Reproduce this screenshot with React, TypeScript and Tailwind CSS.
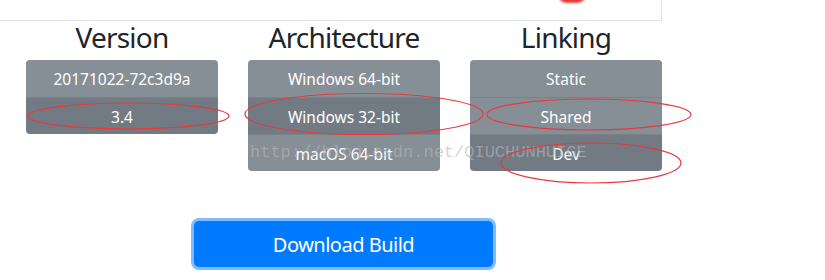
const FONT = { fontFamily: '"Noto Sans", "Open Sans", Arial, sans-serif' };

type Col = { title: string; items: string[]; active: number };

const COLS: Col[] = [
  { title: "Version", items: ["20171022-72c3d9a", "3.4"], active: 1 },
  { title: "Architecture", items: ["Windows 64-bit", "Windows 32-bit", "macOS 64-bit"], active: 1 },
  { title: "Linking", items: ["Static", "Shared", "Dev"], active: 2 },
];

function OptionGroup({ col }: { col: Col }) {
  return (
    <div className="w-[192px] flex flex-col items-center">
      <h2 className="text-[28px] leading-[34px] tracking-[-0.8px] text-[#212529] mt-[-1px] mb-[6px]">{col.title}</h2>
      <div className="w-full rounded-[4px] overflow-hidden flex flex-col">
        {col.items.map((it, i) => (
          <div
            key={it}
            className={`h-[37px] pt-[3px] flex items-center justify-center text-[15.5px] text-white ${
              i === col.active ? "bg-[#727b84]" : "bg-[#868e96]"
            } ${i > 0 ? "border-t border-[#7a828a]" : ""}`}
          >
            {it}
          </div>
        ))}
      </div>
    </div>
  );
}

export default function App() {
  return (
    <div className="relative w-[825px] h-[280px] bg-white overflow-hidden" style={FONT}>
      {/* card above, cut off by the screenshot */}
      <div className="relative w-[662px] h-[21px] border-b border-r border-[#e2e2e2]">
        <div className="absolute left-[558px] top-[-14px] w-[28px] h-[17px] rounded-full bg-[#e03a3a] blur-[1px]" />
      </div>

      <div className="flex gap-[30px] ml-[26px]">
        {COLS.map((c) => (
          <OptionGroup key={c.title} col={c} />
        ))}
      </div>

      <div className="ml-[194px] mt-[50px]">
        <button className="w-[299px] h-[46px] pt-[1px] rounded-[5px] bg-[#007bff] text-white text-[20px] tracking-[-0.5px] ring-[3px] ring-[#007bff]/50">
          Download Build
        </button>
      </div>

      {/* watermark */}
      <div
        className="absolute left-[250px] top-[140px] text-[17px] text-[#b8b8b8]/60 whitespace-nowrap pointer-events-none"
        style={{ fontFamily: '"Liberation Mono", monospace' }}
      >
        http://blog.csdn.net/QIUCHUNHUIGE
      </div>

      {/* hand-drawn red annotations */}
      <svg className="absolute inset-0 pointer-events-none" width="825" height="280">
        <g fill="none" stroke="#e8383d" strokeWidth="1.2">
          <ellipse cx="128.5" cy="116" rx="100.5" ry="13" />
          <ellipse cx="364" cy="114" rx="119" ry="20.5" />
          <ellipse cx="589" cy="114.5" rx="102" ry="15.5" />
          <ellipse cx="591" cy="163" rx="90" ry="20" />
        </g>
      </svg>
    </div>
  );
}
